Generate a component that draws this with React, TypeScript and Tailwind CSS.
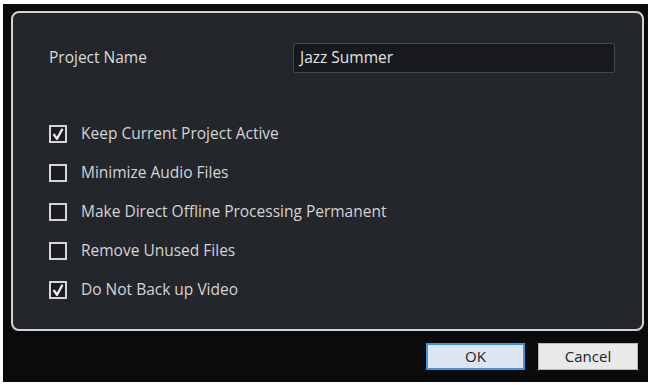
import React from "react";

function Check({ checked }: { checked: boolean }) {
  return (
    <div className="w-[18px] h-[18px] border-2 border-[#d6d6d6] bg-[#1b1d20] flex items-center justify-center shrink-0">
      {checked && (
        <svg width="12" height="12" viewBox="0 0 12 12">
          <path d="M1.5 6 L5 10.8 L10.5 0.8" fill="none" stroke="#ececec" strokeWidth="2.3" />
        </svg>
      )}
    </div>
  );
}

const items: [string, boolean][] = [
  ["Keep Current Project Active", true],
  ["Minimize Audio Files", false],
  ["Make Direct Offline Processing Permanent", false],
  ["Remove Unused Files", false],
  ["Do Not Back up Video", true],
];

export default function App() {
  return (
    <div
      className="w-[651px] h-[385px] bg-white pt-[4px] pl-[3px] pr-[3px] pb-[3px]"
      style={{ fontFamily: '"Open Sans", "Noto Sans", sans-serif' }}
    >
      <div className="w-full h-full bg-[#0b0b0c] pt-[7px] pl-[8px] pr-[4px] flex flex-col">
        <div className="h-[320px] border-2 border-[#d2d2d2] rounded-[8px] bg-[#23262b] pl-[36px] pr-[27px] pt-[30px]">
          <div className="flex items-center h-[30px]">
            <div className="w-[244px] text-[15.5px] text-[#dcdcdc]">Project Name</div>
            <div className="flex-1 h-[30px] bg-[#17191c] border border-[#44474c] rounded-[2px] flex items-center px-[6px] text-[15.5px] text-[#e4e4e4]">
              Jazz Summer
            </div>
          </div>
          <div className="flex flex-col mt-[52px] gap-[21px]">
            {items.map(([label, checked]) => (
              <div key={label} className="flex items-center h-[18px] gap-[14px]">
                <Check checked={checked} />
                <span className="text-[15.5px] text-[#d4d4d4]">{label}</span>
              </div>
            ))}
          </div>
        </div>
        <div className="flex justify-end items-center gap-[13px] mt-[12px] pr-[6px]">
          <button className="w-[99px] h-[27px] bg-[#dbe6f1] border-2 border-[#3d97df] text-[15px] text-[#222]">
            OK
          </button>
          <button className="w-[100px] h-[27px] bg-[#e9e9e9] border border-[#b8b8b8] text-[15px] text-[#222]">
            Cancel
          </button>
        </div>
      </div>
    </div>
  );
}
